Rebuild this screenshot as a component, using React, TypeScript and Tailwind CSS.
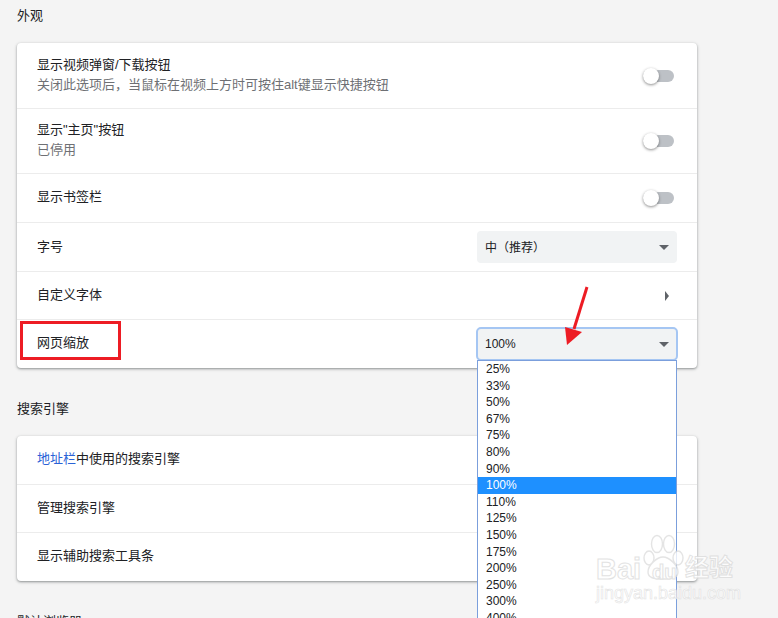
const zooms = ["25%", "33%", "50%", "67%", "75%", "80%", "90%", "100%", "110%", "125%", "150%", "175%", "200%", "250%", "300%", "400%"];

function Toggle() {
  return (
    <div className="relative h-3 w-[31px] rounded-full bg-[#bdc1c6]">
      <div className="absolute left-0 -top-[2px] h-4 w-4 rounded-full bg-white shadow-[0_1px_3px_rgba(0,0,0,0.45)]" />
    </div>
  );
}

function Caret() {
  return <div className="h-0 w-0 border-x-[5px] border-t-[5px] border-x-transparent border-t-[#5f6368]" />;
}

function Row({ children, h, last }: { children: React.ReactNode; h: string; last?: boolean }) {
  return (
    <div className={`flex items-center justify-between pl-5 pr-5 ${h} ${last ? "" : "border-b border-[#ececec]"}`}>
      {children}
    </div>
  );
}

function Card({ children }: { children: React.ReactNode }) {
  return (
    <div className="w-[680px] rounded bg-white shadow-[0_1px_2px_rgba(60,64,67,0.4),0_1px_3px_1px_rgba(60,64,67,0.15)]">
      {children}
    </div>
  );
}

function Select({ label, focused }: { label: string; focused?: boolean }) {
  return (
    <div
      className={`flex h-8 w-[200px] items-center justify-between rounded bg-[#f1f3f4] pl-2 pr-2 ${
        focused ? "outline-2 -outline-offset-1 outline-[#a5c6f3]" : ""
      }`}
    >
      <span className={`text-[12px] text-[#202124] ${focused ? "" : "pt-0.5"}`}>{label}</span>
      <Caret />
    </div>
  );
}

function Watermark() {
  return (
    <div className="pointer-events-none absolute left-[596px] top-[534px] h-[68px] w-[140px] opacity-80">
      <svg className="absolute left-[46px] top-0" width="42" height="47" viewBox="0 0 42 47" fill="none" stroke="#dedede" strokeWidth="1.4">
        <ellipse cx="7" cy="24" rx="5" ry="7" fill="#fff" />
        <ellipse cx="15" cy="10" rx="5.5" ry="8.5" fill="#fff" />
        <ellipse cx="27" cy="10" rx="5.5" ry="8.5" fill="#fff" />
        <ellipse cx="36" cy="24" rx="5" ry="7" fill="#fff" />
        <path d="M21 23c-6 0-15 8-15 15 0 6 6 7 15 7s15-1 15-7c0-7-9-15-15-15z" fill="#fff" />
      </svg>
      <span className="absolute left-0 top-[21px] text-[29px] font-bold leading-none text-white [-webkit-text-stroke:1px_#dcdcdc] [font-family:'Liberation_Sans',sans-serif]">
        Bai
      </span>
      <span className="absolute left-[56px] top-[28px] text-[20px] font-bold leading-none text-white [-webkit-text-stroke:1px_#dcdcdc] [font-family:'Liberation_Sans',sans-serif]">
        du
      </span>
      <span className="absolute left-[89px] top-[22px] whitespace-nowrap text-[24px] font-bold leading-none text-white [-webkit-text-stroke:1px_#dcdcdc]">
        经验
      </span>
      <span className="absolute left-0 top-[50px] whitespace-nowrap text-[18px] leading-none text-white [-webkit-text-stroke:0.6px_#dcdcdc] [font-family:'Liberation_Sans',sans-serif]">
        jingyan.baidu.com
      </span>
    </div>
  );
}

export default function App() {
  return (
    <div className="relative h-[618px] w-[778px] overflow-hidden bg-[#f4f4f4] pl-[17px] text-[13px] text-[#202124] [font-family:'Liberation_Sans','Noto_Sans_CJK_SC',sans-serif]">
      <h2 className="flex h-[43px] items-center pb-[11px] text-[13px] font-normal">外观</h2>
      <Card>
        <Row h="h-[66px]">
          <div className="pb-0.5">
            <div className="leading-5">显示视频弹窗/下载按钮</div>
            <div className="leading-5 text-[#6e7074]">关闭此选项后，当鼠标在视频上方时可按住alt键显示快捷按钮</div>
          </div>
          <div className="mr-[3px]"><Toggle /></div>
        </Row>
        <Row h="h-[65px]">
          <div className="pb-0.5">
            <div className="leading-5">显示"主页"按钮</div>
            <div className="leading-5 text-[#6e7074]">已停用</div>
          </div>
          <div className="mr-[3px]"><Toggle /></div>
        </Row>
        <Row h="h-[49px]">
          <span className="pb-0.5">显示书签栏</span>
          <div className="mr-[3px]"><Toggle /></div>
        </Row>
        <Row h="h-[49px]">
          <span>字号</span>
          <Select label="中（推荐）" />
        </Row>
        <Row h="h-[48px]">
          <span className="pb-0.5">自定义字体</span>
          <div className="mr-2 h-0 w-0 border-y-[5px] border-l-[4px] border-y-transparent border-l-[#5f6368]" />
        </Row>
        <Row h="h-[48px]" last>
          <span className="pb-0.5">网页缩放</span>
          <Select label="100%" focused />
        </Row>
      </Card>
      <h2 className="flex h-[68px] items-end pb-[18px] text-[13px] font-normal">搜索引擎</h2>
      <Card>
        <Row h="h-[49px]">
          <span className="pb-0.5"><span className="text-[#2a62d6]">地址栏</span>中使用的搜索引擎</span>
        </Row>
        <Row h="h-[48px]">
          <span className="pb-0.5">管理搜索引擎</span>
        </Row>
        <Row h="h-[48px]" last>
          <span className="pb-0.5">显示辅助搜索工具条</span>
        </Row>
      </Card>
      <h2 className="mt-[31px] text-[13px] font-normal leading-5">默认浏览器</h2>

      {/* open dropdown list */}
      <div className="absolute left-[477px] top-[360px] w-[200px] border border-[#7b9fdc] bg-white text-[12px] leading-[16.6px] text-[#202124]">
        {zooms.map((z) => (
          <div key={z} className={`h-[16.6px] pl-2 ${z === "100%" ? "bg-[#1e90ff] text-white" : ""}`}>
            {z}
          </div>
        ))}
      </div>

      {/* annotations */}
      <div className="absolute left-[20px] top-[321px] h-[39px] w-[101px] border-[3px] border-[#ed1c24]" />
      <svg className="absolute left-[560px] top-[283px]" width="32" height="66" viewBox="0 0 32 66">
        <path d="M27 4 L14 46" stroke="#ed1c24" strokeWidth="3" fill="none" />
        <path d="M7 62 L5 44 L22 49 Z" fill="#ed1c24" />
      </svg>

      <Watermark />
    </div>
  );
}
